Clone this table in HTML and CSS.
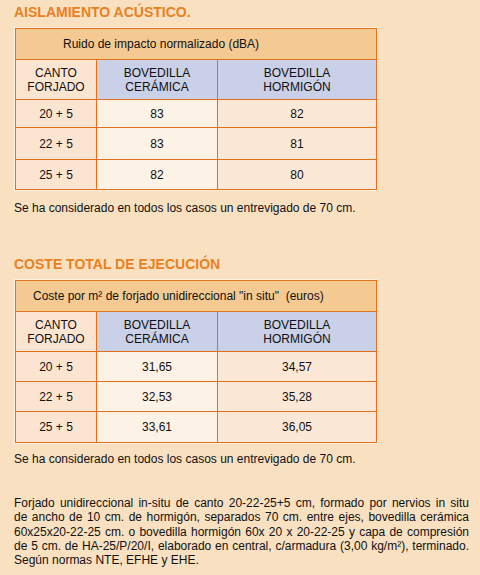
FILE: index.html
```html
<!DOCTYPE html>
<html lang="es">
<head>
  <meta charset="UTF-8" />
  <title>Forjados - Aislamiento y coste</title>
  <link rel="stylesheet" href="styles.css">
</head>
<body>
  <div class="page">
    <h2 class="title">AISLAMIENTO ACÚSTICO.</h2>
    <table class="data first">
      <tr class="head">
        <td colspan="3" class="caption pad-wide">Ruido de impacto normalizado (dBA)</td>
      </tr>
      <tr class="cols">
        <td class="c-canto">CANTO<br>FORJADO</td>
        <td class="c-blue">BOVEDILLA<br>CERÁMICA</td>
        <td class="c-blue">BOVEDILLA<br>HORMIGÓN</td>
      </tr>
      <tr class="r1">
        <td class="c-canto">20 + 5</td>
        <td class="c-mid">83</td>
        <td class="c-right">82</td>
      </tr>
      <tr class="r2">
        <td class="c-canto">22 + 5</td>
        <td class="c-mid">83</td>
        <td class="c-right">81</td>
      </tr>
      <tr class="r3">
        <td class="c-canto">25 + 5</td>
        <td class="c-mid">82</td>
        <td class="c-right">80</td>
      </tr>
    </table>
    <p class="note">Se ha considerado en todos los casos un entrevigado de 70 cm.</p>

    <h2 class="title second-title">COSTE TOTAL DE EJECUCIÓN</h2>
    <table class="data second">
      <tr class="head">
        <td colspan="3" class="caption pad-narrow">Coste por m² de forjado unidireccional "in situ"&nbsp; (euros)</td>
      </tr>
      <tr class="cols">
        <td class="c-canto">CANTO<br>FORJADO</td>
        <td class="c-blue">BOVEDILLA<br>CERÁMICA</td>
        <td class="c-blue">BOVEDILLA<br>HORMIGÓN</td>
      </tr>
      <tr class="r1">
        <td class="c-canto">20 + 5</td>
        <td class="c-mid">31,65</td>
        <td class="c-right">34,57</td>
      </tr>
      <tr class="r2">
        <td class="c-canto">22 + 5</td>
        <td class="c-mid">32,53</td>
        <td class="c-right">35,28</td>
      </tr>
      <tr class="r3">
        <td class="c-canto">25 + 5</td>
        <td class="c-mid">33,61</td>
        <td class="c-right">36,05</td>
      </tr>
    </table>
    <p class="note note-2">Se ha considerado en todos los casos un entrevigado de 70 cm.</p>

    <p class="desc">
      <span class="ln">Forjado unidireccional in-situ de canto 20-22-25+5 cm, formado por nervios in situ</span>
      <span class="ln">de ancho de 10 cm. de hormigón, separados 70 cm. entre ejes, bovedilla cerámica</span>
      <span class="ln">60x25x20-22-25 cm. o bovedilla hormigón 60x 20 x 20-22-25 y capa de compresión</span>
      <span class="ln">de 5 cm. de HA-25/P/20/I, elaborado en central, c/armadura (3,00 kg/m²), terminado.</span>
      <span class="ln last">Según normas NTE, EFHE y EHE.</span>
    </p>
  </div>
</body>
</html>
```
FILE: styles.css
```css
:root {
  --bg: #f9e0c0;
  --orange: #e8811f;
  --line: #e2701a;
  --head: #f5c992;
  --blue: #c9d0e7;
  --canto: #fce5d0;
  --mid: #fdf2e6;
  --right: #fce8d6;
  --text: #111;
}
html, body {
  margin: 0;
  padding: 0;
  background: var(--bg);
}
body {
  font-family: "Liberation Sans", Arial, sans-serif;
  font-size: 12px;
  color: var(--text);
}
.page {
  padding: 4px 11px 0 14px;
}
.title {
  margin: 0;
  font-size: 14px;
  line-height: 16px;
  font-weight: bold;
  color: var(--orange);
}
.second-title {
  margin-top: 41px;
}
.data {
  border-collapse: collapse;
  width: 362px;
  margin: 8px 0 0 1px;
  outline: 1px solid #fdf0e0;
}
.data td {
  border: 1px solid var(--line);
  text-align: center;
  vertical-align: middle;
  padding: 0;
  line-height: 14px;
}
.data .head td {
  background: var(--head);
  height: 30px;
  text-align: left;
}
.pad-wide { padding-left: 47px !important; }
.pad-narrow { padding-left: 17px !important; }
.data .cols td {
  height: 39px;
}
.c-canto { width: 80px; background: var(--canto); }
.c-blue { background: var(--blue); }
.cols .c-blue:nth-child(2) { width: 120px; }
.c-mid { background: var(--mid); }
.c-right { background: var(--right); }
.first .r1 td { height: 27px; }
.first .r2 td { height: 31px; }
.first .r3 td { height: 29px; }
.second .r1 td { height: 29px; }
.second .r2 td { height: 29px; }
.second .r3 td { height: 30px; }
.note {
  margin: 11px 0 0;
  line-height: 14px;
}
.note-2 {
  margin-top: 9px;
}
.desc {
  margin: 30px 0 0;
  line-height: 14.3px;
  width: 455px;
}
.desc .ln {
  display: block;
  white-space: nowrap;
  text-align: justify;
  text-align-last: justify;
}
.desc .ln.last {
  text-align-last: left;
}
```
